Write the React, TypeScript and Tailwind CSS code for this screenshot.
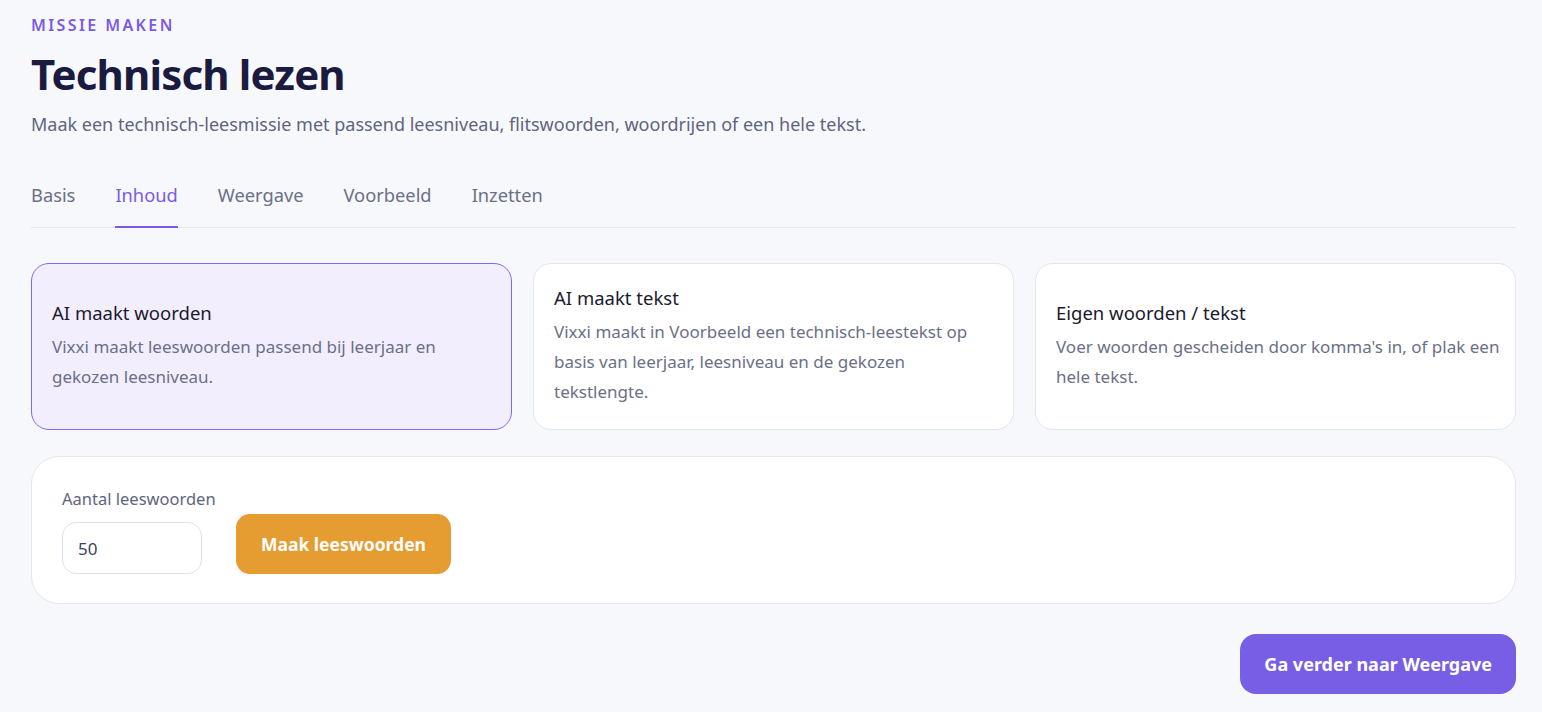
import React, { useState } from 'react';

interface SourceOption {
  id: string;
  title: string;
  description: string;
}

const TABS = ['Basis', 'Inhoud', 'Weergave', 'Voorbeeld', 'Inzetten'];

const SOURCES: SourceOption[] = [
  {
    id: 'ai-words',
    title: 'AI maakt woorden',
    description: 'Vixxi maakt leeswoorden passend bij leerjaar en gekozen leesniveau.',
  },
  {
    id: 'ai-text',
    title: 'AI maakt tekst',
    description:
      'Vixxi maakt in Voorbeeld een technisch-leestekst op basis van leerjaar, leesniveau en de gekozen tekstlengte.',
  },
  {
    id: 'own',
    title: 'Eigen woorden / tekst',
    description: "Voer woorden gescheiden door komma's in, of plak een hele tekst.",
  },
];

export default function App() {
  const [activeTab, setActiveTab] = useState('Inhoud');
  const [source, setSource] = useState('ai-words');
  const [count, setCount] = useState('50');

  return (
    <div
      className="min-h-screen bg-[#f7f8fc] pl-[31px] pr-[26px] pt-[15px] pb-6"
      style={{ fontFamily: '"Noto Sans", "Open Sans", sans-serif' }}
    >
      {/* Header */}
      <p className="text-[16px] font-semibold tracking-[0.15em] text-[#7b5ae6] leading-5">MISSIE MAKEN</p>
      <h1 className="mt-[13px] text-[42px] font-bold text-[#1b1a3f] leading-[52px] tracking-[-0.02em]">
        Technisch lezen
      </h1>
      <p className="mt-[12px] text-[18px] text-[#5e6480] leading-6">
        Maak een technisch-leesmissie met passend leesniveau, flitswoorden, woordrijen of een hele tekst.
      </p>

      {/* Tabs */}
      <nav className="mt-[47px] flex gap-10 border-b border-[#e4e6ef]">
        {TABS.map(tab => {
          const active = tab === activeTab;
          return (
            <button
              key={tab}
              onClick={() => setActiveTab(tab)}
              className={`-mb-px pb-[19px] text-[18.3px] leading-6 border-b-2 ${
                active ? 'text-[#7b5ae6] border-[#7b5ae6]' : 'text-[#6b7087] border-transparent'
              }`}
            >
              {tab}
            </button>
          );
        })}
      </nav>

      {/* Source cards */}
      <div className="mt-[35px] grid grid-cols-3 gap-[21px]">
        {SOURCES.map(opt => {
          const selected = opt.id === source;
          return (
            <button
              key={opt.id}
              onClick={() => setSource(opt.id)}
              className={`h-[167px] rounded-[18px] border pl-[20px] pr-[12px] text-left flex flex-col justify-center ${
                selected ? 'bg-[#f3eefe] border-[#8467ee]' : 'bg-white border-[#e3e6ef]'
              }`}
            >
              <span className="text-[18.5px] text-[#1b1a2e] leading-6">{opt.title}</span>
              <span className="mt-[7px] text-[17px] text-[#6b7088] leading-[30px]">{opt.description}</span>
            </button>
          );
        })}
      </div>

      {/* Word count panel */}
      <div className="mt-[26px] h-[148px] rounded-[28px] border border-[#e3e6ef] bg-white px-[30px] pt-[32px]">
        <label className="block text-[16.5px] text-[#5e6480] leading-5">Aantal leeswoorden</label>
        <div className="mt-[5px] flex items-end gap-[34px]">
          <input
            value={count}
            onChange={e => setCount(e.target.value)}
            className="h-[52px] w-[140px] rounded-[14px] border border-[#dfe2ec] bg-white px-[15px] text-[17px] text-[#3d4260] outline-none"
          />
          <button className="h-[60px] rounded-[14px] bg-[#e59c30] px-[25px] text-[17.5px] font-bold text-white">
            Maak leeswoorden
          </button>
        </div>
      </div>

      {/* Footer action */}
      <div className="mt-[30px] flex justify-end">
        <button className="h-[60px] rounded-[16px] bg-[#775ee4] px-[24px] text-[18px] font-bold text-white">
          Ga verder naar Weergave
        </button>
      </div>
    </div>
  );
}
